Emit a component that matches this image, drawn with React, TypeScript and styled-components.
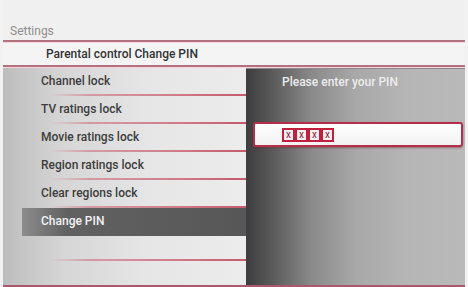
import React from 'react';
import styled, { createGlobalStyle } from 'styled-components';

const GlobalStyle = createGlobalStyle`
  html, body {
    margin: 0;
    padding: 0;
    background: #f2f2f2;
  }
  body {
    font-family: Roboto, "Liberation Sans", sans-serif;
  }
`;

const menuItems = [
   'Channel lock',
   'TV ratings lock',
   'Movie ratings lock',
   'Region ratings lock',
   'Clear regions lock',
   'Change PIN',
];

function App() {
   const selected = 'Change PIN';

   return (
      <Screen>
         <GlobalStyle />
         <Header>
            <Title>Settings</Title>
         </Header>
         <RedLine />
         <SubHeader>Parental control Change PIN</SubHeader>
         <RedLine />
         <Body>
            <Menu>
               {menuItems.map((item) => (
                  <MenuRow key={item} $active={item === selected}>
                     {item}
                  </MenuRow>
               ))}
               <MenuRow $active={false} $short />
            </Menu>
            <PinPanel>
               <Prompt>Please enter your PIN</Prompt>
               <PinField>
                  {[0, 1, 2, 3].map((i) => (
                     <PinDigit key={i}>x</PinDigit>
                  ))}
               </PinField>
            </PinPanel>
         </Body>
         <BottomLine />
      </Screen>
   );
}

const Screen = styled.div`
   width: 468px;
   height: 287px;
   box-sizing: border-box;
   padding: 0 3px 0 3px;
   background: #f2f2f2;
   display: flex;
   flex-direction: column;
   overflow: hidden;
`;

const Header = styled.div`
   height: 40px;
   display: flex;
   align-items: flex-end;
   background: #f0f0f0;
`;

const Title = styled.div`
   font-size: 12px;
   color: #8e8e8e;
   padding: 0 0 2px 7px;
   line-height: 14px;
`;

const RedLine = styled.div`
   height: 2px;
   background: #b3707f;
   border-bottom: 1px solid #f6d6dc;
   flex-shrink: 0;
`;

const SubHeader = styled.div`
   height: 22px;
   display: flex;
   align-items: center;
   padding-left: 43px;
   font-size: 12px;
   font-weight: 500;
   color: #333;
   background: #f4f4f4;
`;

const Body = styled.div`
   flex: 1;
   display: flex;
   min-height: 0;
`;

const Menu = styled.div`
   width: 243px;
   background: linear-gradient(90deg, #bdbdbd 0%, #d6d6d6 25%, #e6e6e6 60%, #ececec 100%);
   display: flex;
   flex-direction: column;
`;

const MenuRow = styled.div<{ $active: boolean; $short?: boolean }>`
   box-sizing: border-box;
   height: ${(p) => (p.$short ? '25px' : '28px')};
   flex-shrink: 0;
   display: flex;
   align-items: center;
   margin-left: ${(p) => (p.$active ? '19px' : '0')};
   padding-left: ${(p) => (p.$active ? '19px' : '38px')};
   font-size: 12px;
   font-weight: 500;
   color: ${(p) => (p.$active ? '#f2f2f2' : '#3d3d3d')};
   background: ${(p) =>
      p.$active
         ? 'linear-gradient(90deg, #8c8c8c 0%, #616161 20%, #575757 100%)'
         : 'transparent'};
   border-bottom: 2px solid transparent;
   border-image: ${(p) =>
      p.$active
         ? 'none'
         : 'linear-gradient(90deg, rgba(200,80,100,0) 20%, rgba(200,80,100,0.45) 35%, #c45a6c 100%) 1'};
`;

const PinPanel = styled.div`
   flex: 1;
   background: linear-gradient(90deg, #3d3d3f 0%, #5a5a5a 12%, #8a8a8a 30%, #a8a8a8 50%, #b6b6b6 75%, #b9b9b9 100%);
   border-top: 1px solid #8a8a8a;
   display: flex;
   flex-direction: column;
   padding: 0 2px 0 7px;
`;

const Prompt = styled.div`
   height: 26px;
   display: flex;
   align-items: center;
   padding-left: 29px;
   font-size: 12px;
   font-weight: 500;
   color: #ececec;
`;

const PinField = styled.div`
   box-sizing: border-box;
   margin-top: 27px;
   height: 25px;
   background: linear-gradient(180deg, #ffffff 0%, #f2f2f2 100%);
   border: 2px solid #b3304c;
   border-radius: 3px;
   display: flex;
   align-items: center;
   gap: 0;
   padding-left: 27px;
   box-shadow: 0 1px 2px rgba(120, 30, 50, 0.5);
`;

const PinDigit = styled.div`
   box-sizing: border-box;
   width: 13px;
   height: 14px;
   border: 2px solid #c0203e;
   background: #f6eef0;
   display: flex;
   align-items: center;
   justify-content: center;
   font-size: 10px;
   line-height: 10px;
   color: #8a2030;
`;

const BottomLine = styled.div`
   height: 2px;
   background: #b0566a;
   flex-shrink: 0;
`;

export default App;
